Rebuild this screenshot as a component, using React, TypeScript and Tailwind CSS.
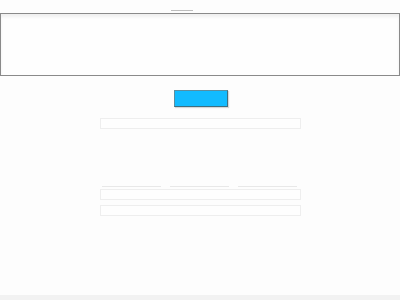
import React from 'react';

const Field: React.FC<{ className?: string }> = ({ className = '' }) => (
  <div className={`h-[11px] w-[201px] border border-[#eeeeee] bg-[#fefefe] ${className}`} />
);

const App: React.FC = () => {
  return (
    <div className="flex h-[300px] w-[400px] flex-col bg-[#fdfdfd] font-['Liberation_Sans',sans-serif]">
      {/* top handle */}
      <div className="h-[13px] pt-[10px]">
        <div className="ml-[171px] h-px w-[22px] bg-[#bdbdbd]" />
      </div>

      {/* framed panel */}
      <div className="h-[63px] w-[400px] border border-[#8a8a8a] bg-[#fefefe] shadow-[inset_0_3px_3px_rgba(0,0,0,0.06)]" />

      {/* action */}
      <div className="flex flex-col items-center pt-[14px]">
        <button className="ml-[2px] h-[17px] w-[54px] border border-[#3f6f80] border-l-[#5a8ea0] border-t-[#5a8ea0] bg-[#12bbff] shadow-[1px_1px_1px_rgba(0,0,0,0.15)]" />
      </div>

      <div className="flex flex-col pl-[100px]">
        <Field className="mt-[11px]" />

        <div className="mt-[57px] flex gap-[9px] pl-[2px]">
          <div className="h-px w-[59px] bg-[#e8e8e8]" />
          <div className="h-px w-[59px] bg-[#e8e8e8]" />
          <div className="h-px w-[59px] bg-[#e8e8e8]" />
        </div>

        <Field className="mt-[2px]" />
        <Field className="mt-[5px] w-[199px]" />
      </div>

      <div className="flex-1" />
      <div className="h-[5px] bg-[#f2f2f2]" />
    </div>
  );
};

export default App;
